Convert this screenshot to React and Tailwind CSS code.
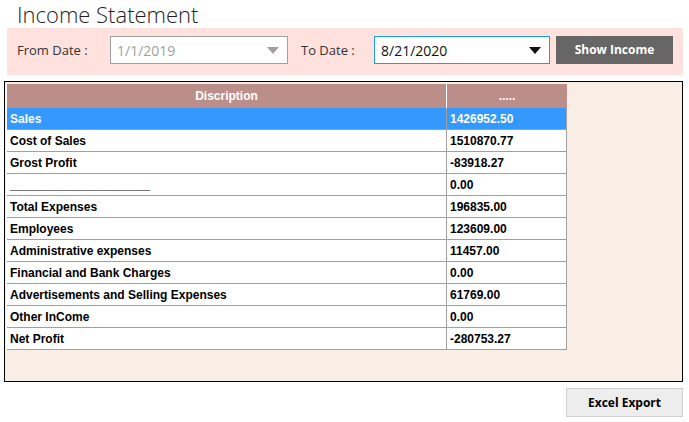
import React from "react";

const rows = [
  { name: "Sales", value: "1426952.50", selected: true },
  { name: "Cost of Sales", value: "1510870.77" },
  { name: "Grost Profit", value: "-83918.27" },
  { name: "_____________________", value: "0.00" },
  { name: "Total Expenses", value: "196835.00" },
  { name: "Employees", value: "123609.00" },
  { name: "Administrative expenses", value: "11457.00" },
  { name: "Financial and Bank Charges", value: "0.00" },
  { name: "Advertisements and Selling Expenses", value: "61769.00" },
  { name: "Other InCome", value: "0.00" },
  { name: "Net Profit", value: "-280753.27" },
];

const ui = { fontFamily: '"Open Sans", "Noto Sans", sans-serif' };
const grid = { fontFamily: '"Liberation Sans", Arial, sans-serif' };

const Caret = ({ color }) => (
  <svg width="12" height="7" viewBox="0 0 12 7">
    <path d="M0 0 L12 0 L6 7 Z" fill={color} />
  </svg>
);

const App = () => {
  return (
    <div className="w-[689px] h-[422px] bg-white overflow-hidden" style={ui}>
      <h1 className="h-[28px] pl-[17px] text-[22px] leading-[28px] font-light text-[#1e1e1e]">
        Income Statement
      </h1>

      {/* filter bar */}
      <div className="ml-[7px] w-[676px] h-[47px] bg-[#ffe1de] pt-[8px] flex items-start text-[13px] text-[#333]">
        <span className="w-[103px] pl-[10px] leading-[28px]">From Date :</span>
        <div className="w-[178px] h-[28px] border border-[#a0a0a0] bg-white flex items-center justify-between pl-[6px] pr-[8px] text-[14px] text-[#a0a0a0]">
          <span>1/1/2019</span>
          <Caret color="#a0a0a0" />
        </div>
        <span className="w-[73px] ml-[13px] leading-[28px]">To Date :</span>
        <div className="w-[176px] h-[28px] border border-[#1ba1e2] bg-white flex items-center justify-between pl-[6px] pr-[8px] text-[14px] text-[#111]">
          <span>8/21/2020</span>
          <Caret color="#111" />
        </div>
        <button className="ml-[6px] w-[117px] h-[28px] bg-[#666666] text-white text-[12px] font-bold">
          Show Income
        </button>
      </div>

      {/* grid panel */}
      <div className="mt-[6px] ml-[4px] w-[679px] h-[301px] border border-black bg-[#f9eee5] pl-[1px] pt-[2px]" style={grid}>
        <div className="w-[561px] border-l border-white">
          <div className="flex h-[24px] bg-[#bc8e8a] text-white text-[12px] font-bold">
            <div className="w-[440px] flex items-center justify-center border-r border-white">Discription</div>
            <div className="w-[120px] flex items-center justify-center">.....</div>
          </div>
          {rows.map((r) => (
            <div
              key={r.name}
              className={
                "flex h-[22px] border-b border-[#a0a0a0] text-[12px] font-bold " +
                (r.selected ? "bg-[#3399ff] text-white" : "bg-white text-black")
              }
            >
              <div className="w-[440px] pl-[3px] flex items-center border-r border-[#a0a0a0] whitespace-nowrap overflow-hidden">
                {r.name}
              </div>
              <div className="w-[120px] pl-[3px] flex items-center border-r border-[#a0a0a0]">
                {r.value}
              </div>
            </div>
          ))}
        </div>
      </div>

      <div className="flex justify-end pr-[6px] mt-[6px]">
        <button className="w-[117px] h-[29px] bg-[#ededed] border border-[#cfcfcf] text-[12px] font-bold text-black" style={ui}>
          Excel Export
        </button>
      </div>
    </div>
  );
};

export default App;
